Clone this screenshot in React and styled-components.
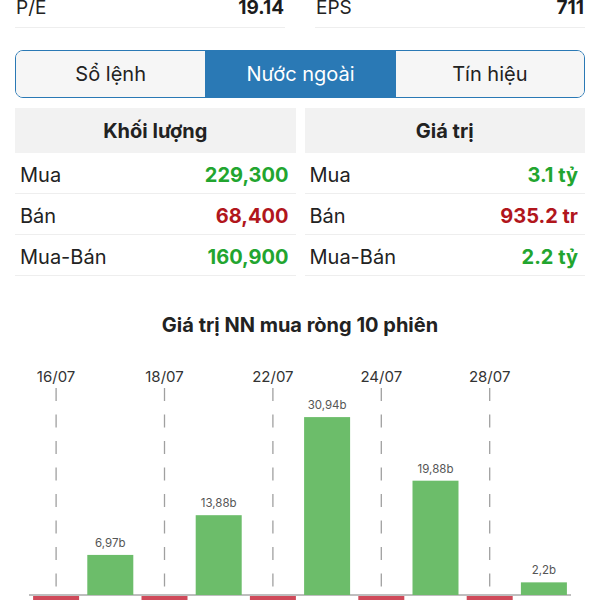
import React from 'react';
import styled, { createGlobalStyle } from 'styled-components';

const GlobalStyle = createGlobalStyle`
  html, body {
    margin: 0;
    padding: 0;
    background: #ffffff;
    overflow: hidden;
  }
  body {
    font-family: Inter, "Noto Sans", "Liberation Sans", sans-serif;
    color: #222222;
  }
`;

const Page = styled.div`
  width: 600px;
  height: 600px;
  padding: 0 15px;
  box-sizing: border-box;
  overflow: hidden;
`;

const StatRow = styled.div`
  display: grid;
  grid-template-columns: 1fr 1fr;
  column-gap: 30px;
  margin-top: -4px;
`;

const StatCell = styled.div`
  display: flex;
  justify-content: space-between;
  align-items: baseline;
  font-size: 19px;
  line-height: 23px;
  padding: 0 1px 8px 1px;
  border-bottom: 1px solid #eeeeee;
`;

const StatValue = styled.span`
  font-weight: 700;
  color: #1c1c1c;
`;

const Tabs = styled.div`
  display: grid;
  grid-template-columns: 1fr 1fr 1fr;
  margin-top: 22px;
  height: 48px;
  border: 1.5px solid #2a79b5;
  border-radius: 8px;
  overflow: hidden;
  box-sizing: border-box;
`;

const Tab = styled.div`
  display: flex;
  align-items: center;
  justify-content: center;
  font-size: 20px;
  background: ${p => (p.$active ? '#2a79b5' : '#f6f6f6')};
  color: ${p => (p.$active ? '#ffffff' : '#222222')};
  border-left: ${p => (p.$first ? 'none' : '1.5px solid #2a79b5')};
`;

const Tables = styled.div`
  display: grid;
  grid-template-columns: 1fr 1fr;
  column-gap: 9px;
  margin-top: 10px;
`;

const Column = styled.div`
  display: flex;
  flex-direction: column;
`;

const Header = styled.div`
  height: 45px;
  display: flex;
  align-items: center;
  justify-content: center;
  background: #f2f2f2;
  font-size: 20px;
  font-weight: 700;
`;

const Row = styled.div`
  height: 41px;
  box-sizing: border-box;
  display: flex;
  align-items: center;
  justify-content: space-between;
  padding: 3px 7px 0 5px;
  border-bottom: 1px solid #eeeeee;
  font-size: 20px;
`;

const Value = styled.span`
  font-weight: 700;
  color: ${p => (p.$tone === 'up' ? '#22a52f' : '#b1161c')};
`;

const ChartTitle = styled.h3`
  margin: 37px 0 0;
  text-align: center;
  font-size: 20px;
  line-height: 24px;
  font-weight: 700;
  color: #222222;
`;

const ChartBox = styled.div`
  margin: 13px -15px 0;
  height: 250px;
`;

const volume = [
  { label: 'Mua', value: '229,300', tone: 'up' },
  { label: 'Bán', value: '68,400', tone: 'down' },
  { label: 'Mua-Bán', value: '160,900', tone: 'up' },
];

const money = [
  { label: 'Mua', value: '3.1 tỷ', tone: 'up' },
  { label: 'Bán', value: '935.2 tr', tone: 'down' },
  { label: 'Mua-Bán', value: '2.2 tỷ', tone: 'up' },
];

const sessions = [
  { date: '16/07', v: -2 },
  { v: 6.97, text: '6,97b' },
  { date: '18/07', v: -2 },
  { v: 13.88, text: '13,88b' },
  { date: '22/07', v: -2 },
  { v: 30.94, text: '30,94b' },
  { date: '24/07', v: -2 },
  { v: 19.88, text: '19,88b' },
  { date: '28/07', v: -2 },
  { v: 2.2, text: '2,2b' },
];

// svg top sits at page y = 350
function NetChart() {
  const top = 350;
  const base = 595 - top;
  const step = 54.2;
  const x0 = 56.1;
  const scale = 5.75;
  const barW = 46;
  return (
    <svg width="600" height="250" viewBox="0 0 600 250">
      {sessions.map((s, i) => {
        const cx = x0 + i * step;
        if (!s.date) return null;
        return (
          <g key={'d' + i}>
            <text
              x={cx}
              y={382 - top}
              textAnchor="middle"
              fontSize="15"
              fill="#333"
              fontFamily="Inter, 'Liberation Sans', sans-serif"
            >
              {s.date}
            </text>
            <line
              x1={cx}
              x2={cx}
              y1={388 - top}
              y2={250}
              stroke="#a0a0a0"
              strokeWidth="1.3"
              strokeDasharray="13 13.5"
            />
          </g>
        );
      })}
      <line x1="29" x2="571" y1={base} y2={base} stroke="#a8a8a8" strokeWidth="1.5" />
      {sessions.map((s, i) => {
        const cx = x0 + i * step;
        if (s.v < 0) {
          return (
            <rect key={'b' + i} x={cx - barW / 2} y={base + 1} width={barW} height="14" fill="#cf4a5a" />
          );
        }
        const h = s.v * scale;
        return (
          <g key={'b' + i}>
            <rect x={cx - barW / 2} y={base - h} width={barW} height={h} fill="#6cbd6a" />
            <text
              x={cx}
              y={base - h - 8}
              textAnchor="middle"
              fontSize="11.5"
              fill="#555"
              fontFamily="Inter, 'Liberation Sans', sans-serif"
            >
              {s.text}
            </text>
          </g>
        );
      })}
    </svg>
  );
}

export default function App() {
  return (
    <>
      <GlobalStyle />
      <Page>
        <StatRow>
          <StatCell>
            <span>P/E</span>
            <StatValue>19.14</StatValue>
          </StatCell>
          <StatCell>
            <span>EPS</span>
            <StatValue>711</StatValue>
          </StatCell>
        </StatRow>

        <Tabs>
          <Tab $first>Sổ lệnh</Tab>
          <Tab $active>Nước ngoài</Tab>
          <Tab>Tín hiệu</Tab>
        </Tabs>

        <Tables>
          <Column>
            <Header>Khối lượng</Header>
            {volume.map(r => (
              <Row key={r.label}>
                <span>{r.label}</span>
                <Value $tone={r.tone}>{r.value}</Value>
              </Row>
            ))}
          </Column>
          <Column>
            <Header>Giá trị</Header>
            {money.map(r => (
              <Row key={r.label}>
                <span>{r.label}</span>
                <Value $tone={r.tone}>{r.value}</Value>
              </Row>
            ))}
          </Column>
        </Tables>

        <ChartTitle>Giá trị NN mua ròng 10 phiên</ChartTitle>
        <ChartBox>
          <NetChart />
        </ChartBox>
      </Page>
    </>
  );
}
